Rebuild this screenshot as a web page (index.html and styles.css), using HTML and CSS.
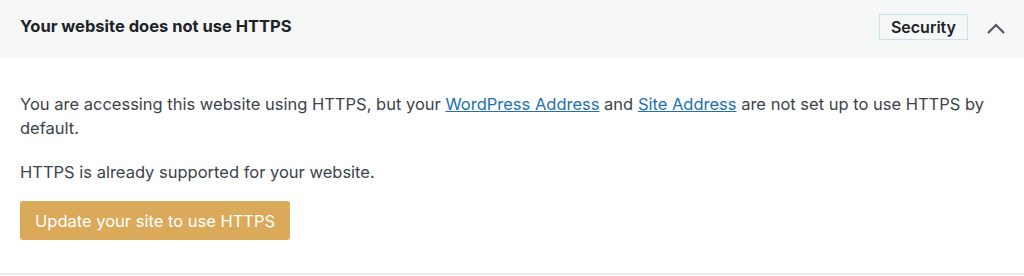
FILE: index.html
```html
<!DOCTYPE html>
<html lang="en">
<head>
  <meta charset="UTF-8" />
  <title>Site Health</title>
  <link rel="stylesheet" href="styles.css">
</head>
<body>
  <div class="panel">
    <div class="panel-head">
      <h3>Your website does not use HTTPS</h3>
      <div class="head-right">
        <span class="badge">Security</span>
        <svg class="chevron" width="20" height="20" viewBox="0 0 20 20">
          <path d="M2 14 L10 6 L18 14" fill="none" stroke="#50575e" stroke-width="2.2" />
        </svg>
      </div>
    </div>
    <div class="panel-body">
      <p>You are accessing this website using HTTPS, but your <a href="#">WordPress Address</a> and <a href="#">Site Address</a> are not set up to use HTTPS by default.</p>
      <p>HTTPS is already supported for your website.</p>
      <button class="btn">Update your site to use HTTPS</button>
    </div>
  </div>
</body>
</html>
```

FILE: styles.css
```css
body {
  margin: 0;
  font-family: Inter, 'Liberation Sans', sans-serif;
  color: #3c434a;
  background: #fff;
}

.panel {
  border-bottom: 2px solid #e6e8ec;
}

.panel-head {
  background: #f6f7f7;
  height: 58px;
  display: flex;
  align-items: center;
  justify-content: space-between;
  padding: 0 18px 0 20px;
}

.panel-head h3 {
  margin: 0;
  font-size: 16.5px;
  font-weight: 650;
  color: #1d2327;
  position: relative;
  top: -3px;
}

.head-right {
  display: flex;
  align-items: center;
  gap: 18px;
}

.badge {
  border: 1px solid #c5e2f0;
  padding: 2px 11px;
  font-size: 16px;
  font-weight: 600;
  color: #1d2327;
  position: relative;
  top: -2px;
}

.chevron {
  display: block;
}

.panel-body {
  padding: 34px 20px 33px;
}

.panel-body p {
  margin: 0 0 20px;
  font-size: 16.5px;
  line-height: 24px;
}

.panel-body a {
  color: #2271b1;
}

.btn {
  display: block;
  margin-top: -3px;
  background: #dba95a;
  color: #fff;
  border: none;
  border-radius: 3px;
  font-family: inherit;
  font-size: 16.5px;
  padding: 0 15px;
  height: 39px;
}
```
